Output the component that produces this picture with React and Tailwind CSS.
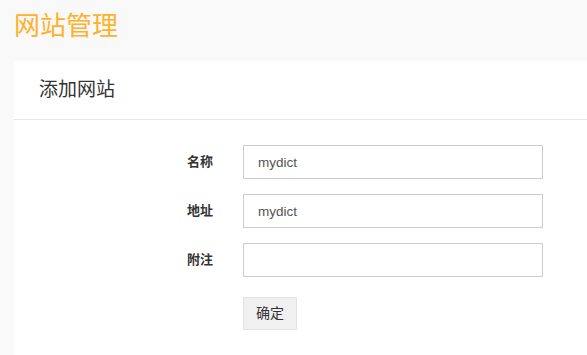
import React, { useState } from 'react';

const fields = [
  { label: '名称', value: 'mydict' },
  { label: '地址', value: 'mydict' },
  { label: '附注', value: '' },
];

const App = () => {
  const [values, setValues] = useState(fields.map((f) => f.value));

  return (
    <div
      className="min-h-screen bg-[#f9f9f9] text-[#333]"
      style={{ fontFamily: '"Liberation Sans", "Noto Sans CJK SC", sans-serif' }}
    >
      {/* Page title */}
      <h1 className="pl-[14px] pt-[8px] h-[61px] text-[26px] leading-[36px] text-[#ffb12b] font-normal">
        网站管理
      </h1>

      {/* Card */}
      <div className="ml-[14px] bg-white min-h-[294px]">
        <div className="h-[59px] pl-[25px] flex items-center border-b border-[#e6e6e6]">
          <h2 className="text-[19px] text-[#333] font-normal">添加网站</h2>
        </div>

        <form className="pl-[173px] pt-[25px] pb-[30px] flex flex-col gap-[15px]">
          {fields.map((f, i) => (
            <div key={f.label} className="flex items-start">
              <label className="w-[56px] pt-[7px] text-[13px] leading-[19px] font-bold text-[#333]">
                {f.label}
              </label>
              <input
                value={values[i]}
                onChange={(e) => {
                  const next = [...values];
                  next[i] = e.target.value;
                  setValues(next);
                }}
                className="w-[300px] h-[34px] px-[14px] border border-[#ccc] text-[13.5px] text-[#555] outline-none"
              />
            </div>
          ))}

          <div className="pl-[56px] pt-[5px]">
            <button
              type="button"
              className="w-[54px] h-[33px] bg-[#f0f0f0] border border-[#e3e3e3] text-[14px] text-[#333]"
            >
              确定
            </button>
          </div>
        </form>
      </div>
    </div>
  );
};

export default App;
